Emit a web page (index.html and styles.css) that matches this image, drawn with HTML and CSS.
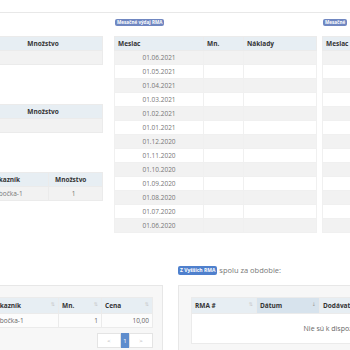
FILE: index.html
```html
<!DOCTYPE html>
<html lang="sk">

<head>
    <meta charset="UTF-8">
    <meta name="viewport" content="width=device-width, initial-scale=1.0">
    <title>RMA prehľad</title>
    <link rel="stylesheet" href="styles.css">
</head>

<body>
    <div class="top-rule"></div>

    <div class="cols">
        <div class="col-left">
            <table class="grid t-sum">
                <thead>
                    <tr><th></th><th class="center">Množstvo</th></tr>
                </thead>
                <tbody>
                    <tr><td></td><td></td></tr>
                </tbody>
            </table>

            <table class="grid t-sum t-gap">
                <thead>
                    <tr><th></th><th class="center">Množstvo</th></tr>
                </thead>
                <tbody>
                    <tr><td></td><td></td></tr>
                </tbody>
            </table>

            <table class="grid t-cust t-gap">
                <thead>
                    <tr><th class="first">Zákazník</th><th class="qty-h">Množstvo</th></tr>
                </thead>
                <tbody>
                    <tr><td class="first">Pobočka-1</td><td class="qty">1</td></tr>
                </tbody>
            </table>
        </div>

        <div class="col-mid">
            <div class="badge-row"><span class="badge">Mesačné výdaj RMA</span></div>
            <table class="grid t-month">
                <thead>
                    <tr><th>Mesiac</th><th>Mn.</th><th>Náklady</th></tr>
                </thead>
                <tbody>
                    <tr><td class="date">01.06.2021</td><td></td><td></td></tr>
                    <tr><td class="date">01.05.2021</td><td></td><td></td></tr>
                    <tr><td class="date">01.04.2021</td><td></td><td></td></tr>
                    <tr><td class="date">01.03.2021</td><td></td><td></td></tr>
                    <tr><td class="date">01.02.2021</td><td></td><td></td></tr>
                    <tr><td class="date">01.01.2021</td><td></td><td></td></tr>
                    <tr><td class="date">01.12.2020</td><td></td><td></td></tr>
                    <tr><td class="date">01.11.2020</td><td></td><td></td></tr>
                    <tr><td class="date">01.10.2020</td><td></td><td></td></tr>
                    <tr><td class="date">01.09.2020</td><td></td><td></td></tr>
                    <tr><td class="date">01.08.2020</td><td></td><td></td></tr>
                    <tr><td class="date">01.07.2020</td><td></td><td></td></tr>
                    <tr><td class="date">01.06.2020</td><td></td><td></td></tr>
                </tbody>
            </table>
        </div>

        <div class="col-right">
            <div class="badge-row"><span class="badge">Mesačné</span></div>
            <table class="grid t-month">
                <thead>
                    <tr><th>Mesiac</th><th></th><th></th></tr>
                </thead>
                <tbody>
                    <tr><td></td><td></td><td></td></tr>
                    <tr><td></td><td></td><td></td></tr>
                    <tr><td></td><td></td><td></td></tr>
                    <tr><td></td><td></td><td></td></tr>
                    <tr><td></td><td></td><td></td></tr>
                    <tr><td></td><td></td><td></td></tr>
                    <tr><td></td><td></td><td></td></tr>
                    <tr><td></td><td></td><td></td></tr>
                    <tr><td></td><td></td><td></td></tr>
                    <tr><td></td><td></td><td></td></tr>
                    <tr><td></td><td></td><td></td></tr>
                    <tr><td></td><td></td><td></td></tr>
                    <tr><td></td><td></td><td></td></tr>
                </tbody>
            </table>
        </div>
    </div>

    <div class="bottom">
        <div class="bottom-left">
            <div class="panel">
                <table class="grid t-list">
                    <thead>
                        <tr>
                            <th>Zákazník<span class="sort">⇅</span></th>
                            <th>Mn.<span class="sort">⇅</span></th>
                            <th>Cena<span class="sort">⇅</span></th>
                        </tr>
                    </thead>
                    <tbody>
                        <tr><td>Pobočka-1</td><td class="num">1</td><td class="num">10,00</td></tr>
                    </tbody>
                </table>
                <div class="pager">
                    <span class="pg">&lt;</span>
                    <span class="pg active">1</span>
                    <span class="pg">&gt;</span>
                </div>
            </div>
        </div>

        <div class="bottom-right">
            <p class="caption"><span class="badge badge-blue">Z Vyšších RMA</span> spolu za obdobie:</p>
            <div class="panel">
                <table class="grid t-rma">
                    <thead>
                        <tr>
                            <th>RMA #<span class="sort">⇅</span></th>
                            <th class="sorted">Dátum<span class="sort">↓</span></th>
                            <th>Dodávateľ</th>
                        </tr>
                    </thead>
                    <tbody>
                        <tr><td colspan="3" class="empty">Nie sú k dispozícii žiadne údaje</td></tr>
                    </tbody>
                </table>
            </div>
        </div>
    </div>
</body>

</html>
```

FILE: styles.css
```css
* {
    margin: 0;
    padding: 0;
    box-sizing: border-box;
}

body {
    font-family: "Open Sans", "Liberation Sans", sans-serif;
    font-size: 6.5px;
    color: #777;
    background: #fff;
    width: 350px;
    height: 350px;
    overflow: hidden;
}

.top-rule {
    height: 13px;
    border-bottom: 1px solid #e8e8e8;
}

/* top row of tables */
.cols {
    display: flex;
    padding-top: 6px;
}

.col-left {
    flex: none;
    width: 163px;
    margin-left: -60px;
    padding-top: 17px;
}

.col-mid {
    flex: none;
    width: 203px;
    margin-left: 11px;
}

.col-right {
    flex: none;
    width: 203px;
    margin-left: 5px;
}

.badge-row {
    height: 17px;
}

.badge {
    display: inline-block;
    height: 7px;
    line-height: 7px;
    padding: 0 2px;
    margin-left: 1px;
    font-size: 4.6px;
    font-weight: 700;
    color: #fff;
    background: #7087c1;
    border-radius: 2px;
    vertical-align: top;
    white-space: nowrap;
}

.badge-blue {
    height: 9px;
    line-height: 9px;
    margin-left: 0;
    font-size: 5px;
    background: #4f80cd;
    vertical-align: 1px;
}

/* tables */
.grid {
    border-collapse: collapse;
    table-layout: fixed;
}

.grid th,
.grid td {
    height: 14px;
    padding: 0 3px;
    border: 1px solid #ebebeb;
    white-space: nowrap;
    overflow: hidden;
    text-align: left;
}

.grid th {
    background: #e7eef3;
    color: #333;
    font-weight: 700;
}

.grid .center {
    text-align: center;
}

.t-gap {
    margin-top: 39px;
}

.t-sum {
    width: 163px;
}

.t-sum th:first-child,
.t-sum td:first-child {
    width: 43px;
}

.t-sum td {
    background: #f2f2f2;
}

.t-cust {
    width: 163px;
}

.t-cust .first {
    width: 108px;
    padding-left: 50px;
}

.t-cust .qty-h {
    padding-left: 6px;
}

.t-cust td {
    background: #f2f2f2;
}

.t-cust .qty {
    text-align: center;
    padding-right: 7px;
}

.t-month {
    width: 203px;
}

.t-month th:nth-child(1) {
    width: 89px;
}

.t-month th:nth-child(2) {
    width: 40px;
}

.t-month tbody tr:nth-child(odd) td {
    background: #f2f2f2;
}

.t-month td {
    border-color: #f0f0f0;
}

.t-month .date {
    text-align: center;
    color: #777;
}

/* bottom row */
.bottom {
    display: flex;
    margin-top: 32px;
}

.bottom-left {
    flex: none;
    width: 188px;
    margin-left: -25px;
    padding-top: 20px;
}

.bottom-right {
    flex: none;
    width: 250px;
    margin-left: 15px;
}

.caption {
    height: 10px;
    line-height: 10px;
    margin-bottom: 10px;
    font-size: 7.5px;
    color: #777;
    white-space: nowrap;
}

.panel {
    background: #f7f7f7;
    border: 1px solid #e7e7e7;
    padding: 11px 10px 12px 12px;
}

.t-list {
    width: 165px;
}

.t-list th {
    height: 16px;
}

.t-list th:nth-child(1) {
    width: 70px;
}

.t-list th:nth-child(2) {
    width: 43px;
}

.t-list td {
    background: #fcfcfc;
    color: #666;
}

.t-list .num {
    text-align: right;
}

.sort {
    float: right;
    font-family: "DejaVu Sans", sans-serif;
    font-size: 5px;
    font-weight: 400;
    color: #c8c8c8;
}

.pager {
    display: flex;
    justify-content: flex-end;
    margin-top: 5px;
    width: 165px;
}

.pg {
    display: flex;
    align-items: center;
    justify-content: center;
    width: 24px;
    height: 15px;
    background: #fff;
    border: 1px solid #e4e4e4;
    color: #aaa;
    font-size: 6px;
}

.pg.active {
    width: 8px;
    background: #5f8dcd;
    border-color: #5f8dcd;
    color: #fff;
}

.t-rma {
    width: 326px;
}

.t-rma th {
    height: 16px;
}

.t-rma th:nth-child(1) {
    width: 65px;
}

.t-rma th:nth-child(2) {
    width: 63px;
}

.t-rma .sorted {
    background: #d7e3ed;
}

.t-rma .sorted .sort {
    color: #999;
}

.t-rma .empty {
    height: 30px;
    background: #fff;
    text-align: center;
    font-size: 7px;
    color: #666;
}
```
